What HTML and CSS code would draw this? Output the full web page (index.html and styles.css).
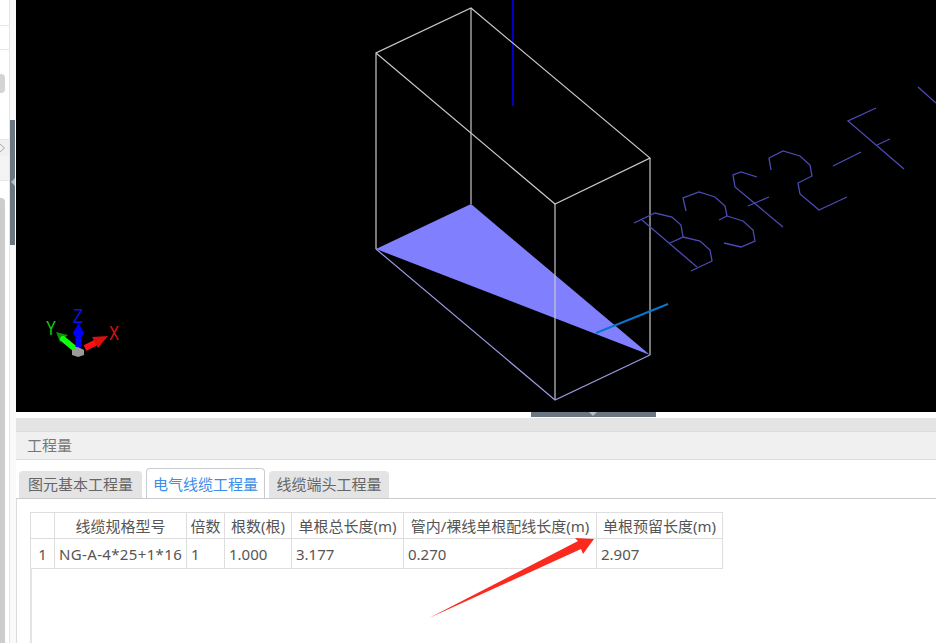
FILE: index.html
```html
<!DOCTYPE html>
<html lang="zh-CN">
<head>
    <meta charset="UTF-8">
    <title>工程量</title>
    <link rel="stylesheet" href="styles.css">
</head>
<body>
    <div class="side">
        <div class="side-panel">
            <div class="side-row r1"></div>
            <div class="side-row r2"></div>
            <div class="side-row r3"><span class="side-knob"></span></div>
            <div class="side-row r4">
                <svg class="side-close" viewBox="0 0 5 10" width="5" height="10">
                    <path d="M0 1 L4.5 5 L0 9" fill="none" stroke="#a8a8a8" stroke-width="1"/>
                </svg>
            </div>
            <div class="side-row r5"></div>
            <div class="side-row r6"><span class="side-scroll"></span></div>
        </div>
        <div class="side-gap">
            <span class="side-handle"></span>
        </div>
    </div>

    <div class="main">
        <div class="view">
            <svg class="scene" viewBox="1 0 920 412" width="920" height="412">
                <!-- 三维视图 -->
                <line x1="498" y1="0" x2="498" y2="106" stroke="#0000c0" stroke-width="2"/>
                <polygon points="361,249 456,204 635,355" fill="#8080ff"/>
                <g fill="none" stroke="#c8c8c8" stroke-width="1.2">
                    <polyline points="361,249 361,53 456,8 635,158 540,204 361,53"/>
                    <line x1="456" y1="8" x2="456" y2="204"/>
                    <line x1="540" y1="204" x2="540" y2="400"/>
                    <line x1="635" y1="158" x2="635" y2="355"/>
                </g>
                <polyline points="361,249 540,400 635,355" fill="none" stroke="#9a9ae0" stroke-width="1.2"/>
                <line x1="581" y1="333" x2="653" y2="304" stroke="#0a74c8" stroke-width="2"/>
                <g fill="none" stroke="#4b4bb4" stroke-width="1.3">
                    <!-- B -->
                    <polyline points="619,223 640,213 657,217 666,225 668,237 655,243"/>
                    <line x1="627" y1="220" x2="682" y2="267"/>
                    <polyline points="668,237 685,241 695,250 697,261 676,271"/>
                    <!-- 3 -->
                    <polyline points="671,211 668,198 684,192 700,197 710,206 712,216 704,220"/>
                    <polyline points="712,216 728,221 738,230 740,241 726,247 709,243"/>
                    <!-- f -->
                    <polyline points="742,177 726,172 718,175 720,187 768,227"/>
                    <line x1="733" y1="206" x2="754" y2="197"/>
                    <!-- 2 -->
                    <polyline points="756,170 754,158 768,151 785,156 795,165 797,176 783,183 785,194 804,210 832,197"/>
                    <line x1="818" y1="166" x2="846" y2="152"/>
                    <!-- F -->
                    <polyline points="861,108 833,121 889,169"/>
                    <line x1="862" y1="145" x2="875" y2="139"/>
                    <line x1="903" y1="87" x2="921" y2="103"/>
                </g>
            </svg>
            <div class="axes">
                <svg viewBox="0 0 100 70" width="100" height="70">
                    <polygon points="26,32 38,35 30,42" fill="#0a900a"/>
                    <line x1="33" y1="39" x2="44" y2="48" stroke="#10ff10" stroke-width="6" stroke-linecap="round"/>
                    <line x1="55" y1="48" x2="67" y2="42" stroke="#ff1010" stroke-width="6"/>
                    <polygon points="78,36 62,37 68,48" fill="#d81010"/>
                    <rect x="45.5" y="33" width="6" height="14" fill="#0000ff"/>
                    <polygon points="48.5,23 54,33 51,38 46,38 43,33" fill="#0000ff"/>
                    <polygon points="42,50 48,47 54,50 54,55 48,57 42,55" fill="#9a9a9a"/>
                    <text class="axis-label y" x="16" y="35" textLength="10" lengthAdjust="spacingAndGlyphs">Y</text>
                    <text class="axis-label z" x="43" y="23" textLength="10" lengthAdjust="spacingAndGlyphs">Z</text>
                    <text class="axis-label x" x="79" y="40" textLength="10" lengthAdjust="spacingAndGlyphs">X</text>
                </svg>
            </div>
            <span class="view-handle"></span>
        </div>
        <div class="bottom">
            <div class="bar"></div>
            <div class="title">工程量</div>
            <div class="tabs">
                <div class="tab">图元基本工程量</div>
                <div class="tab active">电气线缆工程量</div>
                <div class="tab last">线缆端头工程量</div>
            </div>
            <div class="tab-body">
                <table>
                    <thead>
                        <tr>
                            <th class="c-no"></th>
                            <th class="c-name">线缆规格型号</th>
                            <th class="c-times">倍数</th>
                            <th class="c-count">根数(根)</th>
                            <th class="c-total">单根总长度(m)</th>
                            <th class="c-inner">管内/裸线单根配线长度(m)</th>
                            <th class="c-rest">单根预留长度(m)</th>
                        </tr>
                    </thead>
                    <tbody>
                        <tr>
                            <td class="no">1</td>
                            <td class="spec">NG-A-4*25+1*16</td>
                            <td>1</td>
                            <td>1.000</td>
                            <td>3.177</td>
                            <td>0.270</td>
                            <td>2.907</td>
                        </tr>
                    </tbody>
                </table>
                <div class="table-edge"></div>
            </div>
        </div>
        <svg class="arrow" viewBox="0 0 170 90" width="170" height="90">
            <polygon points="0,88 149,11 146,8 165,9 154,24 152,19" fill="#fb2a1e"/>
        </svg>
    </div>
</body>
</html>
```

FILE: styles.css
```css
* {
    box-sizing: border-box;
}

html, body {
    margin: 0;
    padding: 0;
    height: 100%;
    overflow: hidden;
}

body {
    display: flex;
    width: 936px;
    height: 643px;
    background-color: white;
    font-family: "Noto Sans", "Noto Sans CJK SC", sans-serif;
    color: #555;
    font-size: 15px;
}

.side {
    display: flex;
    width: 16px;
    flex-shrink: 0;
}

.side-panel {
    width: 10px;
    display: flex;
    flex-direction: column;
    border-right: 1px solid #e6e6e6;
}

.side-gap {
    width: 6px;
    padding-top: 120px;
    background-color: #fafafa;
}

.side-handle {
    position: relative;
    display: block;
    width: 5px;
    height: 125px;
    background-color: #6b7683;
}

.side-handle::after {
    content: "";
    position: absolute;
    left: 1px;
    top: 58px;
    border-top: 4px solid transparent;
    border-bottom: 4px solid transparent;
    border-right: 4px solid #b8bdc4;
}

.side-row {
    border-bottom: 1px solid #e6e6e6;
    background-color: white;
}

.r1 { height: 26px; }
.r2 { height: 25px; }
.r3 { height: 91px; padding-top: 24px; }
.r4 { height: 16px; padding-top: 3px; background-color: #f0f0f0; border-bottom: none; }
.r5 { height: 25px; background-color: #f4f4f4; }
.r6 { flex: 1; padding-top: 17px; border-bottom: none; }

.side-knob {
    display: block;
    width: 5px;
    height: 19px;
    background-color: #d4d4d4;
    border-radius: 0 4px 4px 0;
}

.side-close {
    display: block;
}

.side-scroll {
    display: block;
    width: 5px;
    height: 445px;
    background-color: #cdcdcd;
    border-radius: 0 4px 0 0;
}

.main {
    position: relative;
    flex: 1;
    min-width: 0;
}

.view {
    position: relative;
    height: 412px;
    background-color: black;
}

.scene {
    display: block;
}

.axes {
    position: absolute;
    left: 14px;
    top: 300px;
}

.axis-label {
    font-family: "Liberation Sans", sans-serif;
    font-size: 20px;
}

.axis-label.y { fill: #10d010; }
.axis-label.z { fill: #1010e0; }
.axis-label.x { fill: #e01010; }

.view-handle {
    position: absolute;
    left: 515px;
    bottom: -5px;
    width: 125px;
    height: 5px;
    background-color: #6b7683;
}

.view-handle::after {
    content: "";
    position: absolute;
    left: 58px;
    top: 0;
    border-left: 4px solid transparent;
    border-right: 4px solid transparent;
    border-top: 4px solid #b8bdc4;
}

.bottom {
    padding-top: 6px;
}

.bar {
    height: 14px;
    background-color: #e4e4e4;
    border-bottom: 1px solid #ddd;
}

.title {
    height: 28px;
    line-height: 27px;
    padding-left: 11px;
    background-color: #f0f0f0;
    border-bottom: 1px solid #dcdcdc;
    color: #777;
}

.tabs {
    display: flex;
    gap: 4px;
    padding: 11px 0 0 3px;
    height: 38px;
}

.tab {
    width: 123px;
    height: 27px;
    line-height: 27px;
    text-align: center;
    background-color: #e4e4e4;
    border-radius: 4px 4px 0 0;
    color: #666;
}

.tab.last {
    width: 120px;
}

.tab.active {
    width: 119px;
    height: 30px;
    margin-top: -3px;
    line-height: 30px;
    background-color: white;
    border: 1px solid #c8ccd0;
    border-bottom: none;
    color: #3b8fe8;
    position: relative;
    z-index: 1;
}

.tab-body {
    position: relative;
    height: 145px;
    border-top: 1px solid #c8ccd0;
    border-left: 1px solid #dcdcdc;
    padding: 13px 0 0 13px;
}

.table-edge {
    position: absolute;
    left: 13px;
    top: 69px;
    bottom: 0;
    width: 2px;
    background-color: #e4e4e4;
}

table {
    border-collapse: collapse;
    table-layout: fixed;
    width: 692px;
}

th, td {
    border: 1px solid #dedede;
    font-weight: normal;
    font-size: 15px;
    color: #555;
    padding: 0 0 0 4px;
    white-space: nowrap;
    overflow: hidden;
}

th {
    height: 26px;
    text-align: center;
    padding: 0;
}

td {
    height: 30px;
}

td.no {
    text-align: center;
    padding: 0;
}

td.spec {
    letter-spacing: 0.35px;
}

.c-no { width: 24px; }
.c-name { width: 132px; }
.c-times { width: 38px; }
.c-count { width: 67px; }
.c-total { width: 112px; }
.c-inner { width: 193px; }
.c-rest { width: 126px; }

.arrow {
    position: absolute;
    left: 413px;
    top: 530px;
}
```
